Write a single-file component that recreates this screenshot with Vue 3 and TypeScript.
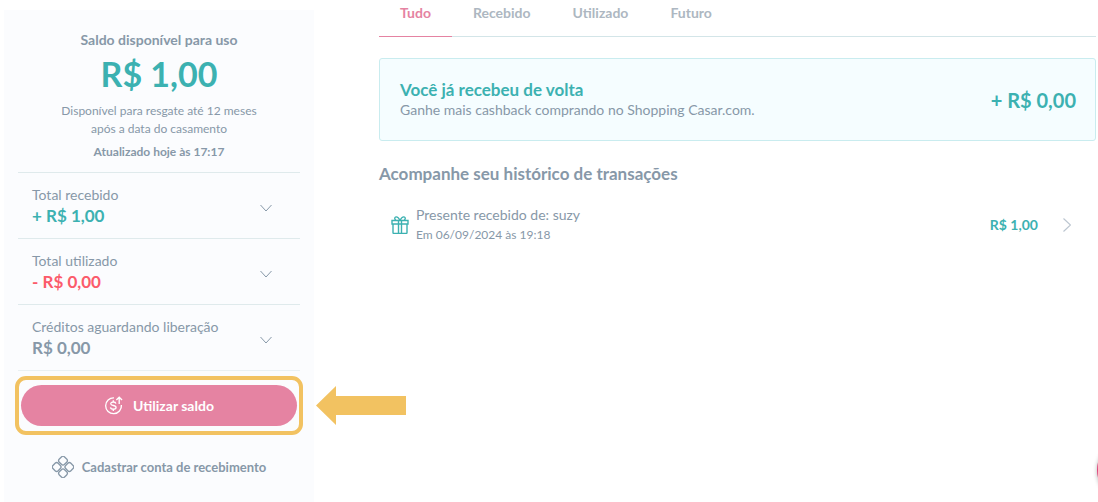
<script setup lang="ts">
import { ref } from 'vue'

interface Total {
  label: string
  value: string
  tone: 'positive' | 'negative' | 'neutral'
}

const totals: Total[] = [
  { label: 'Total recebido', value: '+ R$ 1,00', tone: 'positive' },
  { label: 'Total utilizado', value: '- R$ 0,00', tone: 'negative' },
  { label: 'Créditos aguardando liberação', value: 'R$ 0,00', tone: 'neutral' },
]

const tabs: string[] = ['Tudo', 'Recebido', 'Utilizado', 'Futuro']
const activeTab = ref<string>('Tudo')
</script>

<template>
  <div class="page">
    <aside class="sidebar">
      <section class="balance">
        <h2 class="balance-title">Saldo disponível para uso</h2>
        <p class="balance-value">R$ 1,00</p>
        <p class="balance-note">Disponível para resgate até 12 meses<br />após a data do casamento</p>
        <p class="balance-updated">Atualizado hoje às 17:17</p>
      </section>

      <button v-for="total in totals" :key="total.label" type="button" class="total">
        <span class="total-text">
          <span class="total-label">{{ total.label }}</span>
          <span class="total-value" :class="total.tone">{{ total.value }}</span>
        </span>
        <svg class="chevron-down" viewBox="0 0 12 8" aria-hidden="true">
          <path d="M.5 1 6 7l5.500-6" />
        </svg>
      </button>

      <div class="use-balance">
        <button type="button" class="primary">
          <svg class="coin" viewBox="0 0 20 20" aria-hidden="true">
            <path d="M10.500 2A8.300 8.300 0 1 0 18.300 9.500" />
            <path d="M16 8.500V1.500M13 4.300l3-3 3 3" />
            <path d="M12.500 8c-.2-1.200-1.200-1.700-2.700-1.700S7.100 7 7.100 8.100c0 2.600 5.600 1.200 5.600 3.900 0 1.200-1.200 1.900-2.900 1.900s-2.800-.7-3-2M9.800 4.500v1.800M9.800 13.900v1.800" />
          </svg>
          <span>Utilizar saldo</span>
        </button>
        <svg class="arrow" viewBox="0 0 90 39" aria-hidden="true">
          <path d="M0 19.500 20 0v10h70v19H20v10z" />
        </svg>
      </div>

      <a class="account" href="#conta">
        <svg class="account-icon" viewBox="0 0 22 22" aria-hidden="true">
          <g transform="rotate(45 11 11)">
            <rect x="2.800" y="2.800" width="7.400" height="7.400" rx="2.200" />
            <rect x="11.800" y="2.800" width="7.400" height="7.400" rx="2.200" />
            <rect x="2.800" y="11.800" width="7.400" height="7.400" rx="2.200" />
            <rect x="11.800" y="11.800" width="7.400" height="7.400" rx="2.200" />
          </g>
        </svg>
        <span>Cadastrar conta de recebimento</span>
      </a>
    </aside>

    <main class="content">
      <nav class="tabs">
        <button
          v-for="tab in tabs"
          :key="tab"
          type="button"
          class="tab"
          :class="{ active: tab === activeTab }"
          @click="activeTab = tab"
        >
          {{ tab }}
        </button>
      </nav>

      <section class="cashback">
        <div>
          <h2 class="cashback-title">Você já recebeu de volta</h2>
          <p class="cashback-note">Ganhe mais cashback comprando no Shopping Casar.com.</p>
        </div>
        <strong class="cashback-value">+ R$ 0,00</strong>
      </section>

      <h2 class="history-title">Acompanhe seu histórico de transações</h2>

      <a class="transaction" href="#transacao">
        <svg class="gift" viewBox="0 0 18 18" aria-hidden="true">
          <path d="M1 4.500h16v3.500H1zM2 8v8.500q0 1 1 1h12q1 0 1-1V8M7.500 4.500v13M10.500 4.500v13" />
          <path d="M9 4.500C7.800 2 6.500.7 5 .9 3.200 1.200 3.500 3.500 5 4.300M9 4.500C10.200 2 11.500.7 13 .9c1.800.3 1.500 2.600 0 3.400" />
        </svg>
        <span class="transaction-text">
          <span class="transaction-name">Presente recebido de: suzy</span>
          <span class="transaction-date">Em 06/09/2024 às 19:18</span>
        </span>
        <strong class="transaction-value">R$ 1,00</strong>
        <svg class="chevron-right" viewBox="0 0 8 14" aria-hidden="true">
          <path d="m.5.500 7 6.500-7 6.500" />
        </svg>
      </a>
    </main>

    <button type="button" class="chat" aria-label="Chat"></button>
  </div>
</template>

<style>
body {
  margin: 0;
  background: #fff;
}
</style>

<style scoped>
.page {
  position: relative;
  display: flex;
  align-items: stretch;
  min-height: 100vh;
  box-sizing: border-box;
  padding: 0 2px 0 4px;
  overflow: hidden;
  font-family: Lato, sans-serif;
  font-size: 14px;
  line-height: 20px;
  color: #8798a8;
}

h2,
p {
  margin: 0;
}

button {
  font: inherit;
  color: inherit;
  background: none;
  border: 0;
  padding: 0;
  cursor: pointer;
}

a {
  color: inherit;
  text-decoration: none;
}

svg {
  flex: none;
  fill: none;
  stroke: currentColor;
}

.sidebar {
  display: flex;
  flex: none;
  flex-direction: column;
  width: 282px;
  margin-top: 10px;
  padding: 20px 14px;
  background: #fbfcfe;
}

.balance {
  padding-bottom: 10px;
  text-align: center;
}

.balance-title {
  font-size: 14px;
  line-height: 20px;
}

.balance-value {
  font-size: 34px;
  line-height: 48px;
  font-weight: 700;
  color: #3cb1b1;
}

.balance-note {
  margin-top: 4px;
  font-size: 12px;
  line-height: 18px;
}

.balance-updated {
  margin-top: 4px;
  font-size: 12px;
  line-height: 20px;
  font-weight: 700;
}

.total {
  display: flex;
  align-items: center;
  justify-content: space-between;
  height: 66px;
  padding: 4px 28px 0 14px;
  border-top: 1px solid #dfeaec;
  text-align: left;
}

.total-text {
  display: flex;
  flex-direction: column;
  padding-bottom: 4px;
}

.total-value {
  font-size: 17px;
  line-height: 22px;
  font-weight: 700;
}

.positive {
  color: #3cb1b1;
}

.negative {
  color: #fb5b6b;
}

.chevron-down {
  width: 12px;
  height: 8px;
}

.use-balance {
  position: relative;
  padding: 14px 3px 0;
  border-top: 1px solid #e9f0f2;
}

.use-balance::before {
  content: '';
  position: absolute;
  inset: 5px -3px -9px -3px;
  border: 4px solid #f2c261;
  border-radius: 11px;
  pointer-events: none;
}

.primary {
  display: flex;
  align-items: center;
  justify-content: center;
  gap: 10px;
  width: 100%;
  height: 41px;
  border-radius: 21px;
  background: #e583a2;
  color: #fff;
  font-weight: 700;
}

.coin {
  width: 19px;
  height: 19px;
  stroke-width: 1.4;
}

.arrow {
  position: absolute;
  top: 15px;
  left: 298px;
  width: 90px;
  height: 39px;
  fill: #f2c261;
  stroke: none;
}

.account {
  display: flex;
  align-items: center;
  justify-content: center;
  gap: 8px;
  margin-top: 30px;
  font-size: 13px;
  font-weight: 700;
}

.account-icon {
  width: 22px;
  height: 22px;
  stroke-width: 1.3;
}

.content {
  flex: 1;
  min-width: 0;
  margin-left: 65px;
}

.tabs {
  display: flex;
  border-bottom: 1px solid #d3e5e8;
}

.tab {
  height: 37px;
  margin-bottom: -1px;
  padding: 0 21px 10px;
  border-bottom: 1px solid transparent;
  font-weight: 700;
  color: #adb7c1;
}

.tab.active {
  border-color: #e583a2;
  color: #e583a2;
}

.cashback {
  display: flex;
  align-items: center;
  justify-content: space-between;
  margin-top: 21px;
  padding: 20px 19px 20px 20px;
  border: 1px solid #c9ecef;
  border-radius: 3px;
  background: #f5fdff;
}

.cashback-title {
  font-size: 17px;
  line-height: 21px;
  color: #3cb1b1;
}

.cashback-note {
  line-height: 20px;
}

.cashback-value {
  font-size: 20px;
  color: #3cb1b1;
}

.history-title {
  margin-top: 22px;
  font-size: 17px;
  line-height: 22px;
}

.transaction {
  display: flex;
  align-items: center;
  margin-top: 20px;
  padding: 0 25px 0 12px;
}

.gift {
  width: 18px;
  height: 18px;
  color: #3cb1b1;
  stroke-width: 1.4;
}

.transaction-text {
  display: flex;
  flex: 1;
  flex-direction: column;
  margin-left: 7px;
}

.transaction-date {
  font-size: 12px;
}

.transaction-value {
  margin-right: 25px;
  color: #3cb1b1;
}

.chevron-right {
  width: 8px;
  height: 14px;
  color: #bcc6d0;
  stroke-width: 1.2;
}

.chat {
  position: absolute;
  right: -59px;
  bottom: 2px;
  width: 60px;
  height: 60px;
  border-radius: 50%;
  background: #e0457b;
  box-shadow: 0 1px 4px rgba(0, 0, 0, 0.3);
}
</style>
